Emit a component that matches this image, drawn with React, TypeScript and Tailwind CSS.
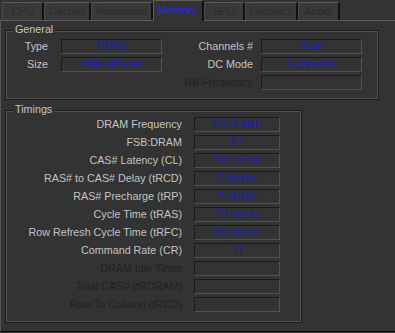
import React from "react";

const tabs = ["CPU", "Caches", "Mainboard", "Memory", "SPD", "Graphics", "About"];
const tabWidths = ["w-[42px]", "w-[47px]", "w-[62px]", "w-[51px]", "w-[41px]", "w-[53px]", "w-[42px]"];

const timings: [string, string, boolean][] = [
  ["DRAM Frequency", "533.5 MHz", true],
  ["FSB:DRAM", "1:2", true],
  ["CAS# Latency (CL)", "7.0 clocks", true],
  ["RAS# to CAS# Delay (tRCD)", "7 clocks", true],
  ["RAS# Precharge (tRP)", "7 clocks", true],
  ["Cycle Time (tRAS)", "20 clocks", true],
  ["Row Refresh Cycle Time (tRFC)", "86 clocks", true],
  ["Command Rate (CR)", "1T", true],
  ["DRAM Idle Timer", "", false],
  ["Total CAS# (tRDRAM)", "", false],
  ["Row To Column (tRCD)", "", false],
];

function Field({ value, className }: { value: string; className: string }) {
  return (
    <div
      className={`h-[15px] border border-solid border-[#1b1b1b] border-b-[#525252] border-r-[#525252] bg-[#333] text-center leading-[13px] text-[#1d1dbb] ${className}`}
    >
      {value}
    </div>
  );
}

function Group({
  title,
  className,
  children,
}: {
  title: string;
  className: string;
  children: React.ReactNode;
}) {
  return (
    <div
      className={`relative border border-[#1c1c1c] shadow-[inset_0_0_0_1px_#525252] ${className}`}
    >
      <span className="absolute left-[7px] top-[-8px] bg-[#333] px-[2px] leading-[13px] text-[#c4c4c4]">
        {title}
      </span>
      {children}
    </div>
  );
}

export default function App() {
  return (
    <div className="w-[395px] h-[333px] overflow-hidden bg-[#333] font-['Liberation_Sans',Arial,sans-serif] text-[10.75px] text-[#c4c4c4]">
      {/* tab strip */}
      <div className="flex items-end h-[20px] pl-[2px]">
        {tabs.map((t, i) =>
          t === "Memory" ? (
            <div
              key={t}
              className={`relative z-10 -mb-[1px] h-[21px] ${tabWidths[i]} border-t border-l border-r-2 border-t-[#5e5e5e] border-l-[#5e5e5e] border-r-[#111] bg-[#333] pl-[4px] pt-[3px] leading-[13px] text-[#2828f0]`}
            >
              {t}
            </div>
          ) : (
            <div
              key={t}
              className={`h-[18px] ${tabWidths[i]} border-t border-l border-r-2 border-t-[#5a5a5a] border-l-[#4a4a4a] border-r-[#111] bg-[#393939] pt-[2px] text-center leading-[13px] text-[#2c2c2c]`}
            >
              {t}
            </div>
          )
        )}
      </div>

      {/* panel */}
      <div className="h-[312px] border-t border-l border-b border-t-[#5a5a5a] border-l-[#555] border-b-[#0e0e0e] pt-[9px]">
        <Group title="General" className="ml-[4px] w-[374px] h-[70px] pt-[8px]">
          <div className="flex flex-col gap-[3px]">
            <div className="flex items-center h-[15px]">
              <span className="w-[42px] text-right">Type</span>
              <Field value="DDR3" className="ml-[13px] w-[101px]" />
              <span className="w-[91px] text-right">Channels #</span>
              <Field value="Dual" className="ml-[8px] w-[101px]" />
            </div>
            <div className="flex items-center h-[15px]">
              <span className="w-[42px] text-right">Size</span>
              <Field value="4096 MBytes" className="ml-[13px] w-[101px]" />
              <span className="w-[91px] text-right">DC Mode</span>
              <Field value="Symmetric" className="ml-[8px] w-[101px]" />
            </div>
            <div className="flex items-center h-[15px]">
              <span className="w-[156px]" />
              <span className="w-[91px] text-right text-[#222]">NB Frequency</span>
              <Field value="" className="ml-[8px] w-[101px]" />
            </div>
          </div>
        </Group>

        <Group title="Timings" className="ml-[4px] mt-[10px] w-[297px] h-[213px] pt-[6px]">
          <div className="flex flex-col gap-[3px]">
            {timings.map(([label, value, on]) => (
              <div key={label} className="flex items-center h-[15px]">
                <span className={`w-[176px] text-right ${on ? "" : "text-[#222]"}`}>{label}</span>
                <Field value={value} className="ml-[12px] w-[86px]" />
              </div>
            ))}
          </div>
        </Group>
      </div>
    </div>
  );
}
